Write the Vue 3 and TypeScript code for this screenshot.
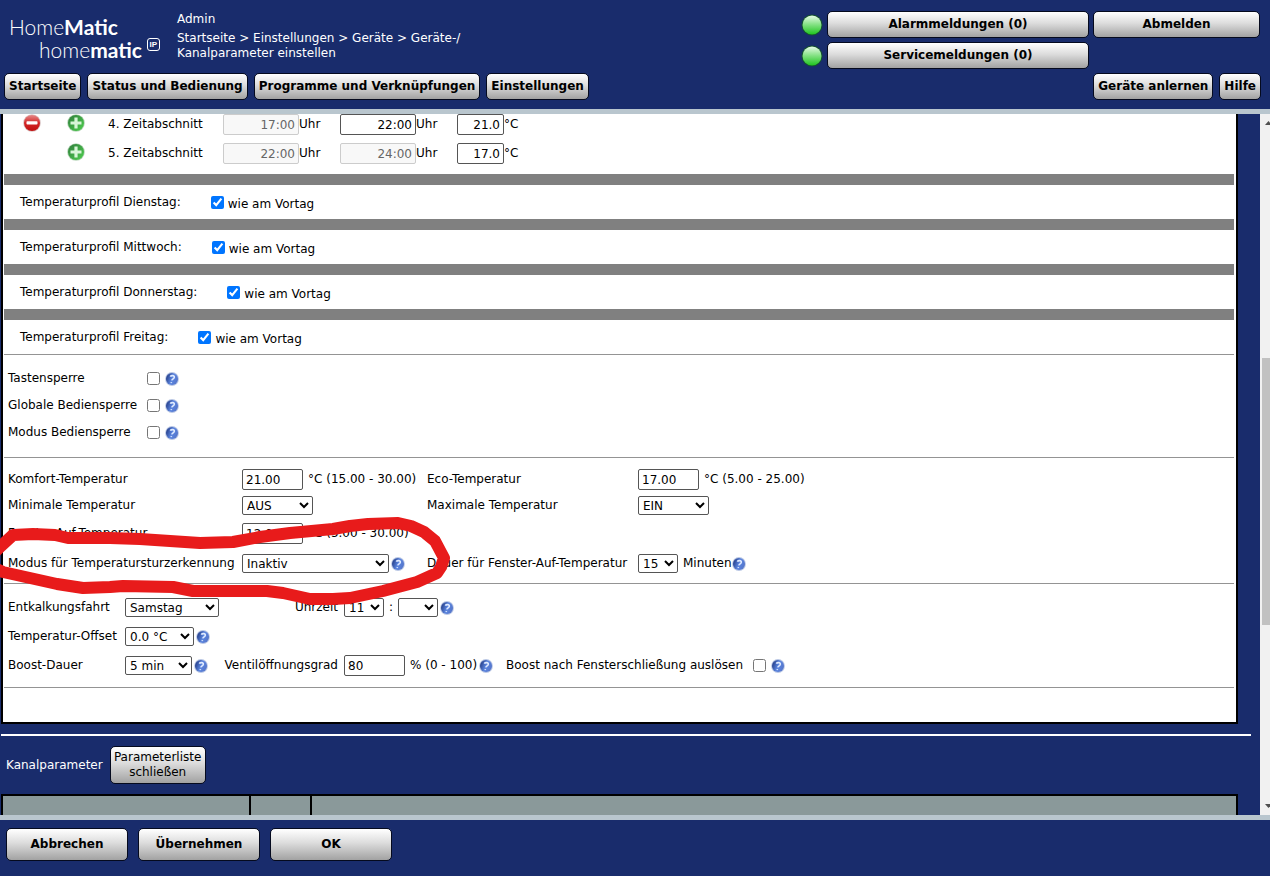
<script setup lang="ts">
import { ref, h, type FunctionalComponent } from 'vue'

interface Slot {
  nr: number
  removable: boolean
  from: string
  to: string
  toLocked: boolean
  temp: string
}

const slots = ref<Slot[]>([
  { nr: 4, removable: true, from: '17:00', to: '22:00', toLocked: false, temp: '21.0' },
  { nr: 5, removable: false, from: '22:00', to: '24:00', toLocked: true, temp: '17.0' },
])

const days = ref([
  { name: 'Dienstag', same: true },
  { name: 'Mittwoch', same: true },
  { name: 'Donnerstag', same: true },
  { name: 'Freitag', same: true },
])

const locks = ref([
  { id: 'tasten', label: 'Tastensperre', on: false },
  { id: 'global', label: 'Globale Bediensperre', on: false },
  { id: 'modus', label: 'Modus Bediensperre', on: false },
])

const nav = ['Startseite', 'Status und Bedienung', 'Programme und Verknüpfungen', 'Einstellungen']
const actions = ['Abbrechen', 'Übernehmen', 'OK']

const HelpIcon: FunctionalComponent = () =>
  h('button', { class: 'help', type: 'button', 'aria-label': 'Hilfe' }, [
    h('svg', { viewBox: '0 0 14 14', width: 14, height: 14 }, [
      h('circle', { cx: 7, cy: 7, r: 6.9, fill: '#b9c6e4' }),
      h('circle', { cx: 7, cy: 7, r: 6, fill: 'url(#g-help)' }),
      h('path', {
        d: 'M5.3 4.6C6.2 3.2 9.6 3.2 9.3 5.4C9.1 6.8 7.2 6.9 6.8 8.4M6.4 10.1L6.2 11',
        fill: 'none',
        stroke: '#dfeaff',
        'stroke-width': 1.6,
      }),
    ]),
  ])
</script>

<template>
  <div class="page">
    <svg class="defs" width="0" height="0" aria-hidden="true">
      <defs>
        <linearGradient id="g-help" x1="0" y1="0.3" x2="1" y2="0.7">
          <stop offset="0" stop-color="#233c86" />
          <stop offset="0.5" stop-color="#5c86e0" />
          <stop offset="1" stop-color="#5474c8" />
        </linearGradient>
        <linearGradient id="g-red" x1="0" y1="0" x2="0" y2="1">
          <stop offset="0" stop-color="#e58a8a" />
          <stop offset="0.5" stop-color="#d32626" />
          <stop offset="1" stop-color="#c01010" />
        </linearGradient>
        <linearGradient id="g-add" x1="0" y1="0" x2="1" y2="1">
          <stop offset="0" stop-color="#2f7d3c" />
          <stop offset="1" stop-color="#4fd04f" />
        </linearGradient>
        <linearGradient id="g-ok" x1="0" y1="0" x2="0" y2="1">
          <stop offset="0" stop-color="#e6fbe6" />
          <stop offset="0.5" stop-color="#7fe07f" />
          <stop offset="1" stop-color="#1fc41f" />
        </linearGradient>
      </defs>
    </svg>

    <header class="header">
      <div class="top">
        <div class="logo">
          <div class="logo-a">Home<b>Matic</b></div>
          <div class="logo-b">home<b>matic</b><span class="ip">IP</span></div>
        </div>
        <div class="info">
          <div class="user">Admin</div>
          <nav class="crumbs">
            <a href="#">Startseite</a> &gt; <a href="#">Einstellungen</a> &gt; <a href="#">Geräte</a> &gt;
            <a href="#">Geräte-/<br />Kanalparameter einstellen</a>
          </nav>
        </div>
        <div class="status">
          <svg class="lamp" viewBox="0 0 22 22"><circle cx="11" cy="11" r="10.5" fill="#14522f" /><circle cx="11" cy="11" r="9.5" fill="url(#g-ok)" /></svg>
          <button class="btn" type="button">Alarmmeldungen (0)</button>
          <button class="btn" type="button">Abmelden</button>
          <svg class="lamp" viewBox="0 0 22 22"><circle cx="11" cy="11" r="10.5" fill="#14522f" /><circle cx="11" cy="11" r="9.5" fill="url(#g-ok)" /></svg>
          <button class="btn" type="button">Servicemeldungen (0)</button>
        </div>
      </div>
      <nav class="menu">
        <button v-for="n in nav" :key="n" class="btn" type="button">{{ n }}</button>
        <span class="spacer"></span>
        <button class="btn" type="button">Geräte anlernen</button>
        <button class="btn" type="button">Hilfe</button>
      </nav>
    </header>

    <div class="middle">
      <main class="content">
        <div class="panel">
          <div class="slots">
            <div v-for="s in slots" :key="s.nr" class="slot">
              <span class="cell">
                <button v-if="s.removable" class="round" type="button" aria-label="Entfernen">
                  <svg viewBox="0 0 18 18" width="18" height="18">
                    <circle cx="9" cy="9" r="8.8" fill="#d9c4c4" /><circle cx="9" cy="9" r="8" fill="url(#g-red)" />
                    <rect x="3.5" y="7.2" width="11" height="3.4" rx="0.8" fill="#fff" />
                  </svg>
                </button>
              </span>
              <span class="cell">
                <button class="round" type="button" aria-label="Hinzufügen">
                  <svg viewBox="0 0 18 18" width="18" height="18">
                    <circle cx="9" cy="9" r="8.8" fill="#b9d6bb" /><circle cx="9" cy="9" r="8" fill="url(#g-add)" />
                    <path d="M9 3.5V14.5M3.5 9H14.5" stroke="#d8f5d8" stroke-width="3.2" />
                  </svg>
                </button>
              </span>
              <span class="slot-name">{{ s.nr }}. Zeitabschnitt</span>
              <label><input v-model="s.from" class="time" type="text" disabled />Uhr</label>
              <label><input v-model="s.to" class="time" type="text" :disabled="s.toLocked" />Uhr</label>
              <label><input v-model="s.temp" class="deg" type="text" />°C</label>
            </div>
          </div>

          <div v-for="d in days" :key="d.name" class="day">
            <span>Temperaturprofil {{ d.name }}:</span>
            <label><input v-model="d.same" type="checkbox" /><span>wie am Vortag</span></label>
          </div>

          <section class="locks">
            <div v-for="l in locks" :key="l.id" class="lock">
              <label :for="l.id">{{ l.label }}</label>
              <input :id="l.id" v-model="l.on" type="checkbox" />
              <HelpIcon class="after-box" />
            </div>
          </section>

          <section class="temps">
            <label for="komfort">Komfort-Temperatur</label>
            <div class="field"><input id="komfort" class="num" type="text" value="21.00" /><span class="unit">°C (15.00 - 30.00)</span></div>
            <label for="eco">Eco-Temperatur</label>
            <div class="field"><input id="eco" class="num" type="text" value="17.00" /><span class="unit">°C (5.00 - 25.00)</span></div>

            <label for="tmin">Minimale Temperatur</label>
            <div class="field"><select id="tmin" class="w71"><option>AUS</option></select></div>
            <label for="tmax">Maximale Temperatur</label>
            <div class="field"><select id="tmax" class="w71"><option>EIN</option></select></div>

            <label for="fenster">Fenster-Auf-Temperatur</label>
            <div class="field wide"><input id="fenster" class="num" type="text" value="12.00" /><span class="unit">°C (5.00 - 30.00)</span></div>

            <label for="sturz">Modus für Temperatursturzerkennung</label>
            <div class="field"><select id="sturz" class="w147"><option>Inaktiv</option></select><HelpIcon class="after-select" /></div>
            <label for="dauer">Dauer für Fenster-Auf-Temperatur</label>
            <div class="field"><select id="dauer" class="w40"><option>15</option></select><span class="unit">Minuten</span><HelpIcon /></div>

            <svg class="mark" viewBox="0 512 460 100" width="460" height="100" aria-hidden="true">
              <path
                d="M-6 553L1 546L13 535L33 534L55 535L68 538L110 538L140 539L170 541L200 543L233 542L260 537L290 533L333 529L350 526L368 524L398 523L411 526L424 532L435 541L444 558L441 567L437 573L417 582L383 591L350 598L333 599L310 599L283 593L267 591L193 591L173 587L123 586L110 587L83 588L57 584L30 578L3 572L-6 568"
              />
            </svg>
          </section>

          <section class="misc">
            <label for="kalk">Entkalkungsfahrt</label>
            <div class="field"><select id="kalk" class="w94"><option>Samstag</option></select></div>
            <label for="uhr" class="right">Uhrzeit</label>
            <div class="field wide">
              <select id="uhr" class="w40"><option>11</option></select><span class="unit">:</span>
              <select class="w40 minutes" aria-label="Minuten"><option></option></select><HelpIcon class="after-select" />
            </div>

            <label for="offset">Temperatur-Offset</label>
            <div class="field full"><select id="offset" class="w69"><option>0.0 °C</option></select><HelpIcon class="after-select" /></div>

            <label for="boost">Boost-Dauer</label>
            <div class="field"><select id="boost" class="w67"><option>5 min</option></select><HelpIcon class="after-select" /></div>
            <label for="ventil" class="right">Ventilöffnungsgrad</label>
            <div class="field"><input id="ventil" class="num" type="text" value="80" /><span class="unit">% (0 - 100)</span><HelpIcon class="after-select" /></div>
            <div class="field">
              <label for="bf">Boost nach Fensterschließung auslösen</label>
              <input id="bf" class="box" type="checkbox" /><HelpIcon class="after-box" />
            </div>
          </section>
        </div>

        <div class="channel">
          <span>Kanalparameter</span>
          <button class="btn list" type="button">Parameterliste<br />schließen</button>
        </div>

        <table class="params">
          <tbody>
            <tr>
              <td class="c1"></td>
              <td class="c2"></td>
              <td></td>
            </tr>
          </tbody>
        </table>
      </main>
      <div class="scroll" aria-hidden="true">
        <svg width="10" height="17" viewBox="0 0 10 17"><path d="M5 11L8.5 7L12 11Z" fill="#505050" /></svg>
        <div class="track"><div class="thumb"></div></div>
        <svg width="10" height="17" viewBox="0 0 10 17"><path d="M5 6L8.5 10L12 6Z" fill="#505050" /></svg>
      </div>
    </div>

    <footer class="footer">
      <button v-for="a in actions" :key="a" class="btn" type="button">{{ a }}</button>
    </footer>
  </div>
</template>

<style>
body {
  margin: 0;
  background: #192c6c;
}
.help svg {
  display: block;
}
</style>

<style scoped>
.page {
  display: flex;
  flex-direction: column;
  min-height: 100vh;
  background: #192c6c;
  color: #000;
  font: 12px/15px 'DejaVu Sans', Verdana, sans-serif;
}
.defs {
  position: absolute;
}
input,
select,
button {
  font: inherit;
  color: inherit;
  box-sizing: border-box;
  margin: 0;
}
.btn {
  padding: 0 4px;
  min-height: 27px;
  border: 1px solid #050a1e;
  border-radius: 5px;
  background: linear-gradient(#fff, #dcdcdc 45%, #a2a2a2);
  font-weight: bold;
  color: #000;
  white-space: nowrap;
}
.help {
  display: block;
  flex: none;
  width: 14px;
  height: 14px;
  padding: 0;
  border: 0;
  background: none;
}
.after-select {
  margin-left: 2px;
}
.after-box {
  margin-left: 5px;
}
.header {
  padding: 11px 9px 9px 4px;
  border-bottom: 5px solid #b9c6ce;
}
.top {
  display: flex;
  min-height: 62px;
  color: #fff;
}
.logo {
  width: 173px;
  padding: 4px 0 0 5px;
  box-sizing: border-box;
  font: 300 21px/23px Lato, sans-serif;
}
.logo b {
  font-weight: 700;
}
.logo-b {
  display: flex;
  padding-left: 30px;
}
.ip {
  width: 11px;
  height: 11px;
  margin: 0 0 0 5px;
  border: 1px solid #fff;
  border-radius: 3px;
  font: bold 8px/11px 'Liberation Sans', sans-serif;
  text-align: center;
}
.user {
  padding: 1px 0 4px;
}
.crumbs a {
  color: #fff;
  text-decoration: none;
}
.info {
  flex: 1;
}
.status {
  display: grid;
  grid-template-columns: 22px 262px 167px;
  gap: 4px;
  align-content: start;
  align-items: center;
  margin-right: 1px;
}
.lamp {
  width: 22px;
  height: 22px;
}
.menu {
  display: flex;
  gap: 6px;
}
.spacer {
  flex: 1;
}
.middle {
  flex: 1;
  display: flex;
}
.content {
  flex: 1;
  min-width: 0;
  padding: 0 9px 0 1px;
  overflow: hidden;
}
.panel {
  margin-right: 13px;
  padding: 0 2px 34px 1px;
  border: 2px solid #000;
  border-top: 0;
  background: #fff;
}
.slots {
  display: grid;
  gap: 8px;
  padding-bottom: 10px;
}
.slot {
  display: grid;
  grid-template-columns: 44px 44px 125px 117px 117px auto;
  align-items: center;
  padding-left: 6px;
}
.slot label,
.field {
  display: flex;
  align-items: center;
}
.cell {
  align-self: start;
  height: 18px;
  padding-left: 13px;
}
.round {
  display: block;
  padding: 0;
  border: 0;
  background: none;
}
.round svg {
  display: block;
}
.slot-name {
  padding-left: 10px;
}
input[type='text'] {
  height: 21px;
  padding: 1px 3px;
  border: 1px solid #555;
  border-radius: 2px;
  background: #fff;
}
input[type='text']:disabled {
  border-color: #ccc;
  background: #f8f8f8;
  color: #666;
}
input.time {
  width: 76px;
  text-align: right;
}
input.deg {
  width: 47px;
  text-align: right;
}
input.num {
  width: 61px;
}
input[type='checkbox'] {
  flex: none;
  width: 13px;
  height: 13px;
}
.day {
  display: flex;
  align-items: center;
  gap: 30px;
  min-height: 34px;
  padding-left: 16px;
  border-top: 11px solid #808080;
}
.day label {
  display: flex;
  align-items: center;
  gap: 4px;
}
.day label span {
  padding-top: 4px;
}
.locks {
  padding: 10px 0 11px 4px;
  border-top: 1px solid #949494;
}
.lock {
  display: grid;
  grid-template-columns: 139px 13px auto;
  align-items: center;
  justify-content: start;
  height: 27px;
}
.temps {
  position: relative;
  display: grid;
  grid-template-columns: 234px 185px 211px 1fr;
  grid-template-rows: 27px 25px 31px 29px;
  align-items: center;
  padding: 8px 0 5px 4px;
  border-top: 1px solid #949494;
}
.wide {
  grid-column: span 2;
}
.temps .wide {
  grid-column: span 3;
}
.unit {
  padding-left: 5px;
  white-space: nowrap;
}
.temps label,
.misc label {
  white-space: nowrap;
}
select {
  height: 19px;
  padding: 0;
  border: 1px solid #555;
  border-radius: 2px;
  background: #fff;
}
.w40 {
  width: 40px;
}
.w67 {
  width: 67px;
}
.w69 {
  width: 69px;
}
.w71 {
  width: 71px;
}
.w94 {
  width: 94px;
}
.w147 {
  width: 147px;
}
.minutes {
  margin-left: 5px;
}
.mark {
  position: absolute;
  left: -4px;
  top: 54px;
  pointer-events: none;
}
.mark path {
  fill: none;
  stroke: #e81b1b;
  stroke-width: 12;
  stroke-linejoin: round;
}
.misc {
  display: grid;
  grid-template-columns: 117px 96px 123px 162px 1fr;
  grid-auto-rows: 29px;
  align-items: center;
  padding: 9px 0 7px 4px;
  border-top: 1px solid #949494;
  border-bottom: 1px solid #949494;
}
.full {
  grid-column: span 4;
}
.right {
  padding-right: 6px;
  text-align: right;
}
input.box {
  margin-left: 10px;
}
.channel {
  display: flex;
  align-items: center;
  gap: 7px;
  margin-top: 10px;
  padding: 10px 0 10px 5px;
  border-top: 2px solid #fff;
  color: #fff;
}
.list {
  min-width: 96px;
  min-height: 38px;
  padding: 0 3px;
  font-weight: normal;
}
.params {
  width: calc(100% - 13px);
  border-collapse: collapse;
  background: #8a999a;
}
.params td {
  height: 19px;
  padding: 0;
  border: 2px solid #000;
  border-bottom: 0;
}
.c1 {
  width: 246px;
}
.c2 {
  width: 59px;
}
.scroll {
  display: flex;
  flex-direction: column;
  width: 10px;
  background: #f1f1f1;
  overflow: hidden;
}
.scroll svg {
  display: block;
  flex: none;
}
.track {
  flex: 1;
  display: grid;
  grid-template-rows: 227fr 267fr 173fr;
}
.thumb {
  grid-row: 2;
  margin-left: 2px;
  background: #c1c1c1;
}
.footer {
  display: flex;
  gap: 10px;
  padding: 8px 6px 15px;
  border-top: 5px solid #b9c6ce;
}
.footer .btn {
  width: 122px;
  min-height: 33px;
}
</style>
